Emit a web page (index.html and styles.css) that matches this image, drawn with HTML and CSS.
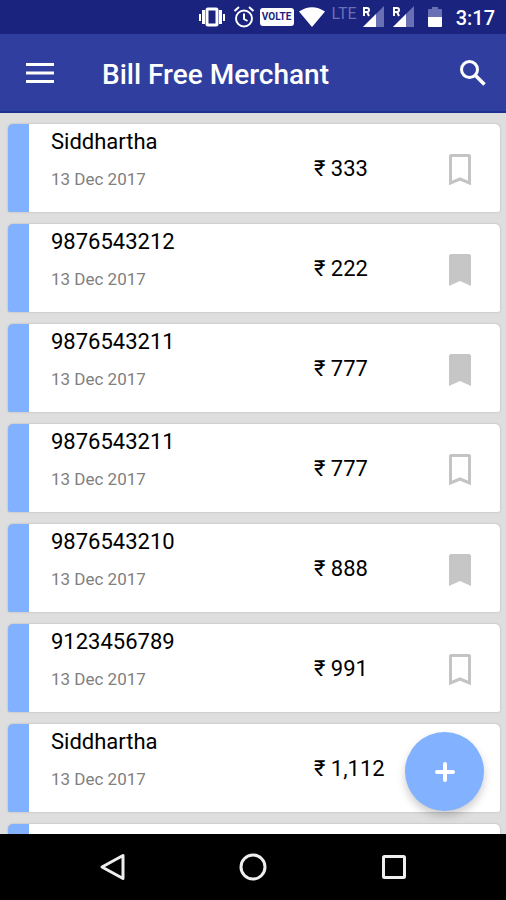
FILE: index.html
```
<!DOCTYPE html>
<html lang="en">
	<head>
		<meta charset="utf-8">
		<meta name="viewport" content="width=device-width, initial-scale=1">
		<title>Bill Free Merchant</title>
		<link rel="stylesheet" href="styles.css">
	</head>
	<body>
		<!-- shared bookmark and signal shapes -->
		<svg class="defs" width="0" height="0" aria-hidden="true">
			<symbol id="mark-empty" viewBox="0 0 22 32">
				<path d="M2 1.5h18q.5 0 .5.5v27L11 25l-9.5 4V2q0-.5.5-.5z" fill="none" stroke="#c4c4c4" stroke-width="3"/>
			</symbol>
			<symbol id="mark-full" viewBox="0 0 22 32">
				<path d="M2 0h18q2 0 2 2v30l-11-5-11 5V2q0-2 2-2z" fill="#c6c6c6"/>
			</symbol>
			<symbol id="signal" viewBox="0 0 22 22">
				<path d="M22 0v21H1z" fill="#6a70b4"/>
				<path d="M14 8v13H1z" fill="#fff"/>
				<path d="M0 0h9v11H0z" fill="#1a237e"/>
				<path d="M2 10V2h3q2 0 2 2t-2 2H2m3 0l2 4" fill="none" stroke="#fff" stroke-width="2"/>
			</symbol>
		</svg>

		<div class="status">
			<svg width="26" height="22" viewBox="0 0 26 22">
				<rect x="8" y="3" width="10" height="16" rx="1" fill="none" stroke="#fff" stroke-width="3"/>
				<path d="M4.5 4v14M21.5 4v14" stroke="#fff" stroke-width="3"/>
				<path d="M1 8v7M25 8v7" stroke="#fff" stroke-width="2"/>
			</svg>
			<svg class="alarm" width="22" height="22" viewBox="0 0 22 22" fill="none" stroke="#fff" stroke-width="2">
				<circle cx="11" cy="12.5" r="8"/>
				<path d="M11 7.5V13l3.5 2M1.5 5L6 1M20.5 5L16 1"/>
			</svg>
			<span class="volte">VOLTE</span>
			<svg class="wifi" width="26" height="20" viewBox="0 0 26 20">
				<path d="M0 4.5Q13-4 26 4.5L13 20z" fill="#fff"/>
			</svg>
			<span class="lte">LTE</span>
			<svg class="signal" width="22" height="22"><use href="#signal"/></svg>
			<svg class="signal second" width="22" height="22"><use href="#signal"/></svg>
			<svg class="battery" width="14" height="20" viewBox="0 0 14 20">
				<path d="M0 3q0-1 1-1h3V0h6v2h3q1 0 1 1v7H0z" fill="#6a70b4"/>
				<path d="M0 10h14v9q0 1-1 1H1q-1 0-1-1z" fill="#fff"/>
			</svg>
			<span class="time">3:17</span>
		</div>

		<header class="topBar">
			<button class="iconBtn" type="button" aria-label="Menu">
				<svg width="28" height="20" viewBox="0 0 28 20">
					<path d="M0 1.5h28M0 10h28M0 18.5h28" stroke="#fff" stroke-width="3"/>
				</svg>
			</button>
			<h1>Bill Free Merchant</h1>
			<button class="iconBtn" type="button" aria-label="Search">
				<svg width="26" height="26" viewBox="0 0 26 26" fill="none" stroke="#fff">
					<circle cx="9.5" cy="9.5" r="8" stroke-width="3"/>
					<path d="M15.5 15.5l9 9" stroke-width="3.5"/>
				</svg>
			</button>
		</header>

		<main class="content">
			<ul class="bills">
				<li class="bill">
					<div class="info"><h2>Siddhartha</h2><p>13 Dec 2017</p></div>
					<span class="price">₹ 333</span>
					<button class="mark" type="button" aria-label="Bookmark"><svg width="22" height="32"><use href="#mark-empty"/></svg></button>
				</li>
				<li class="bill">
					<div class="info"><h2>9876543212</h2><p>13 Dec 2017</p></div>
					<span class="price">₹ 222</span>
					<button class="mark" type="button" aria-label="Bookmark"><svg width="22" height="32"><use href="#mark-full"/></svg></button>
				</li>
				<li class="bill">
					<div class="info"><h2>9876543211</h2><p>13 Dec 2017</p></div>
					<span class="price">₹ 777</span>
					<button class="mark" type="button" aria-label="Bookmark"><svg width="22" height="32"><use href="#mark-full"/></svg></button>
				</li>
				<li class="bill">
					<div class="info"><h2>9876543211</h2><p>13 Dec 2017</p></div>
					<span class="price">₹ 777</span>
					<button class="mark" type="button" aria-label="Bookmark"><svg width="22" height="32"><use href="#mark-empty"/></svg></button>
				</li>
				<li class="bill">
					<div class="info"><h2>9876543210</h2><p>13 Dec 2017</p></div>
					<span class="price">₹ 888</span>
					<button class="mark" type="button" aria-label="Bookmark"><svg width="22" height="32"><use href="#mark-full"/></svg></button>
				</li>
				<li class="bill">
					<div class="info"><h2>9123456789</h2><p>13 Dec 2017</p></div>
					<span class="price">₹ 991</span>
					<button class="mark" type="button" aria-label="Bookmark"><svg width="22" height="32"><use href="#mark-empty"/></svg></button>
				</li>
				<li class="bill">
					<div class="info"><h2>Siddhartha</h2><p>13 Dec 2017</p></div>
					<span class="price">₹ 1,112</span>
				</li>
				<li class="bill"></li>
			</ul>
			<button class="addBtn" type="button" aria-label="Add bill">
				<svg width="20" height="20" viewBox="0 0 20 20">
					<path d="M10 2v16M2 10h16" stroke="#fff" stroke-width="4" stroke-linecap="round"/>
				</svg>
			</button>
		</main>

		<nav class="sysNav">
			<button type="button" aria-label="Back">
				<svg width="28" height="28" viewBox="0 0 28 28" fill="none" stroke="#eee" stroke-width="3" stroke-linejoin="round">
					<path d="M25 2.5v23L4 14z"/>
				</svg>
			</button>
			<button type="button" aria-label="Home">
				<svg width="28" height="28" viewBox="0 0 28 28" fill="none" stroke="#eee" stroke-width="3">
					<circle cx="14" cy="14" r="12"/>
				</svg>
			</button>
			<button type="button" aria-label="Recent apps">
				<svg width="28" height="28" viewBox="0 0 28 28" fill="none" stroke="#eee" stroke-width="3">
					<rect x="3.5" y="3.5" width="21" height="21" rx="1"/>
				</svg>
			</button>
		</nav>
	</body>
</html>
```

FILE: styles.css
```
*{
	padding: 0;
	margin: 0;
	box-sizing: border-box;
}
ul,li{
	list-style: none;
}
button{
	border: 0;
	background: none;
	cursor: pointer;
}
svg{
	display: block;
	flex-shrink: 0;
}
body{
	display: flex;
	flex-direction: column;
	height: 100vh;
	font-family: Roboto, "Noto Sans", sans-serif;
	background-color: #dedede;
	color: #000;
}
.defs{
	position: absolute;
}
/* status bar */
.status{
	display: flex;
	align-items: center;
	justify-content: flex-end;
	height: 34px;
	padding-right: 11px;
	background-color: #1a237e;
	color: #fff;
}
.alarm{
	margin-left: 8px;
}
.volte{
	width: 34px;
	margin-left: 5px;
	border-radius: 3px;
	background-color: #fff;
	color: #1a237e;
	font-size: 10px;
	font-weight: 700;
	line-height: 18px;
	text-align: center;
}
.wifi{
	margin-left: 5px;
}
.lte{
	align-self: flex-start;
	margin-left: 7px;
	color: #6a70b4;
	font-size: 16px;
	line-height: 27px;
}
.signal{
	margin-left: 5px;
}
.signal.second{
	margin-left: 8px;
}
.battery{
	margin-left: 14px;
}
.time{
	margin-left: 14px;
	padding-top: 2px;
	font-size: 20px;
	font-weight: 500;
}
/* title bar */
.topBar{
	display: flex;
	align-items: center;
	height: 79px;
	padding: 0 20px 0 26px;
	border-bottom: 2px solid #1b3192;
	background-color: #303f9f;
	color: #fff;
}
.topBar h1{
	flex: 1;
	margin-left: 48px;
	padding-top: 5px;
	font-size: 28px;
	font-weight: 500;
	line-height: 32px;
}
/* bill list */
.content{
	position: relative;
	flex: 1;
	min-height: 0;
}
.bills{
	display: flex;
	flex-direction: column;
	gap: 12px;
	height: 100%;
	padding: 11px 6px 0 8px;
	overflow: hidden;
}
.bill{
	display: grid;
	grid-template-columns: 1fr 135px 51px;
	align-items: center;
	flex-shrink: 0;
	height: 88px;
	border-left: 21px solid #82b1ff;
	border-radius: 5px 5px 2px 2px;
	background-color: #fff;
	box-shadow: 0 0 2px #aaa;
}
.info{
	align-self: start;
	padding: 5px 0 0 22px;
}
.info h2{
	font-size: 22px;
	font-weight: 400;
	line-height: 26px;
}
.info p{
	margin-top: 13px;
	color: #808080;
	font-size: 17px;
	line-height: 22px;
}
.price{
	padding-top: 2px;
	font-size: 22px;
	line-height: 26px;
}
.mark{
	justify-self: start;
	padding-top: 3px;
}
.addBtn{
	position: absolute;
	right: 22px;
	bottom: 23px;
	display: flex;
	align-items: center;
	justify-content: center;
	width: 79px;
	height: 79px;
	border-radius: 50%;
	background-color: #82b1ff;
	box-shadow: 0 5px 9px rgba(0,0,0,.2);
}
/* system buttons */
.sysNav{
	display: flex;
	align-items: center;
	justify-content: center;
	gap: 113px;
	height: 66px;
	background-color: #000;
}
```
